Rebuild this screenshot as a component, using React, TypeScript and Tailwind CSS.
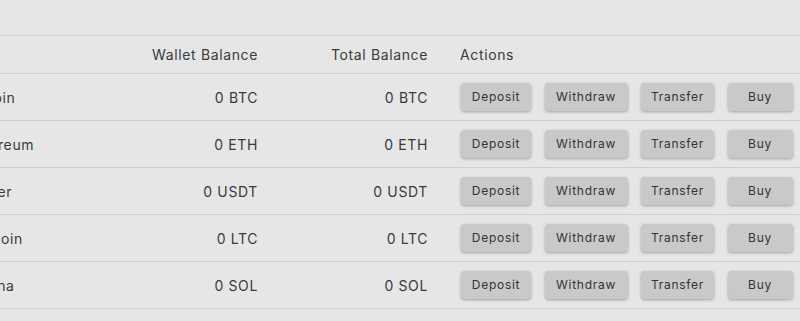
import React from "react";

const rows = [
  { name: "Bitcoin", sym: "BTC" },
  { name: "Ethereum", sym: "ETH" },
  { name: "Tether", sym: "USDT" },
  { name: "Litecoin", sym: "LTC" },
  { name: "Solana", sym: "SOL" },
];

const btns = [
  { label: "Deposit", w: "w-[70px]" },
  { label: "Withdraw", w: "w-[83px]" },
  { label: "Transfer", w: "w-[73px]" },
  { label: "Buy", w: "w-[65px]" },
];

export default function App() {
  return (
    <div
      className="w-[800px] h-[321px] overflow-hidden bg-[#e6e6e6] text-[#3a3a3a]"
      style={{ fontFamily: "Inter, 'Noto Sans', sans-serif" }}
    >
      <div className="pt-[35px] ml-[-50px] w-[880px]">
        <div className="grid grid-cols-[160px_164px_170px_1fr] h-[39px] items-center border-t border-b border-[#cfcfcf] text-[14px] tracking-[0.045em]">
          <div className="px-4"></div>
          <div className="px-4 text-right">Wallet Balance</div>
          <div className="px-4 text-right">Total Balance</div>
          <div className="px-4">Actions</div>
        </div>
        {rows.map((r) => (
          <div
            key={r.sym}
            className="grid grid-cols-[160px_164px_170px_1fr] h-[47px] items-center border-b border-[#cfcfcf] text-[14px] tracking-[0.045em]"
          >
            <div className="px-4">{r.name}</div>
            <div className="px-4 text-right">0 {r.sym}</div>
            <div className="px-4 text-right">0 {r.sym}</div>
            <div className="pl-[17px] flex gap-[13.5px]">
              {btns.map((b) => (
                <button
                  key={b.label}
                  className={`${b.w} h-[28px] rounded-[4px] bg-[#c9c9c9] text-[12px] tracking-[0.06em] text-[#333] shadow-[0_1px_3px_rgba(0,0,0,0.3)]`}
                >
                  {b.label}
                </button>
              ))}
            </div>
          </div>
        ))}
      </div>
    </div>
  );
}
